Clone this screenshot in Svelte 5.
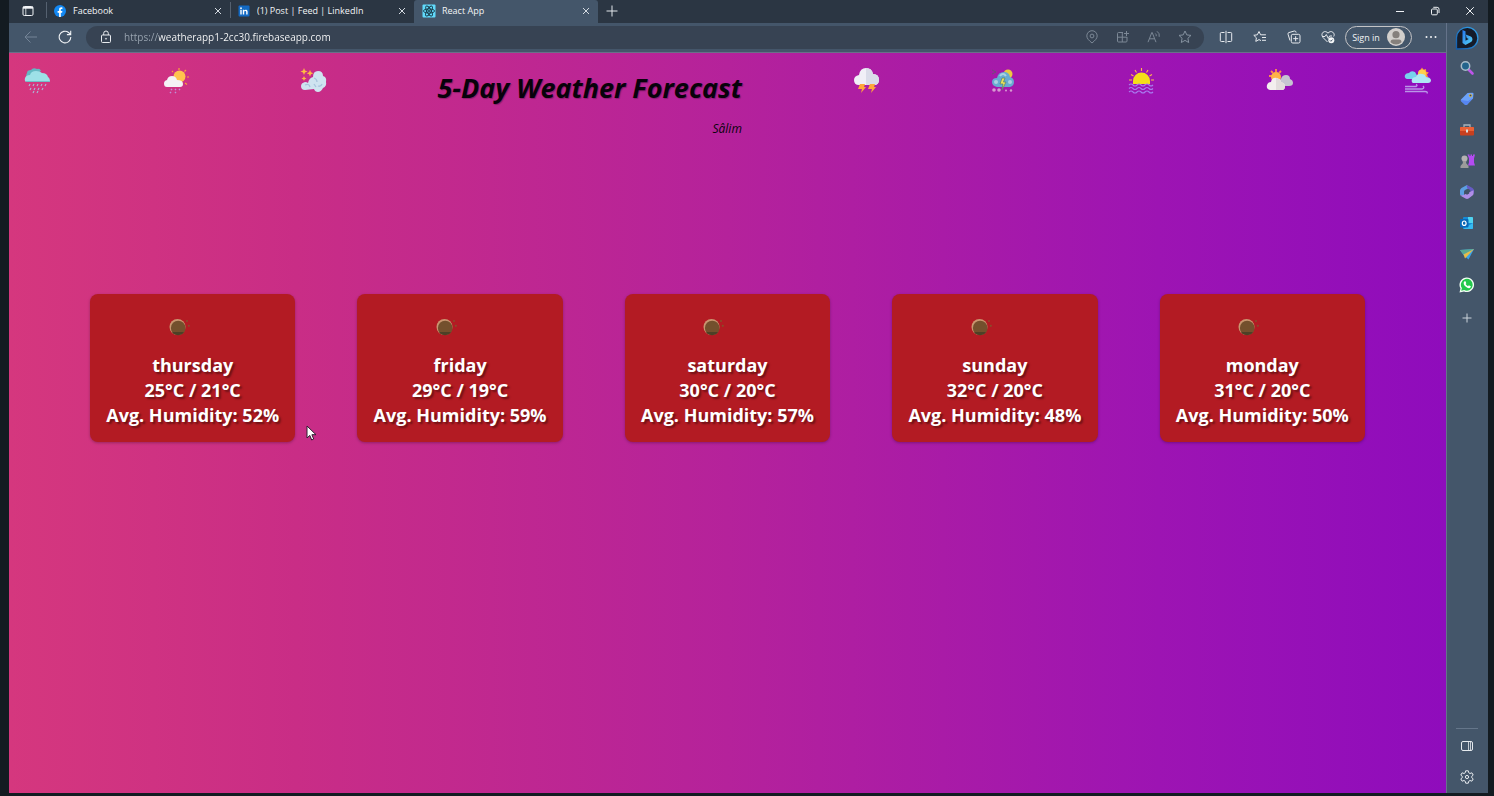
<script>
  const days = [
    { name: 'thursday', high: 25, low: 21, humidity: 52 },
    { name: 'friday', high: 29, low: 19, humidity: 59 },
    { name: 'saturday', high: 30, low: 20, humidity: 57 },
    { name: 'sunday', high: 32, low: 20, humidity: 48 },
    { name: 'monday', high: 31, low: 20, humidity: 50 }
  ];
  let address = $state('https://weatherapp1-2cc30.firebaseapp.com');
</script>

{#snippet closeGlyph()}
  <svg width="8" height="8" viewBox="0 0 8 8" fill="none" stroke="#d5dbe2" stroke-width="1"><path d="M1 1l6 6M7 1l-6 6" /></svg>
{/snippet}

<div class="screen">
  <div class="window">
    <header class="tabs">
      <button class="tab-actions" aria-label="Tab actions">
        <svg width="12" height="12" viewBox="0 0 12 12" fill="none" stroke="#f2f5f8"><rect x="1" y="1.5" width="10" height="9" rx="1.3" /><path d="M1 2.7h10" stroke-width="2" /><path d="M3.8 3v7.5" stroke-width=".8" /></svg>
      </button>
      <div class="tab">
        <svg width="12" height="12" viewBox="0 0 12 12"><circle cx="6" cy="6" r="6" fill="#1388f3" /><path d="M5.1 12V7.8H3.6V6h1.5V4.7c0-1.6.9-2.4 2.3-2.4.5 0 1 .1 1 .1V4h-.7c-.7 0-.9.4-.9.9V6h1.6l-.3 1.8H6.8V12z" fill="#fff" /></svg>
        <span>Facebook</span>
        <button aria-label="Close Facebook">{@render closeGlyph()}</button>
      </div>
      <div class="tab">
        <svg width="12" height="12" viewBox="0 0 12 12"><rect x=".5" y=".5" width="11" height="11" rx="1" fill="#1269c3" /><g fill="#fff"><circle cx="3" cy="3.2" r=".9" /><path d="M2.3 4.8h1.4v4.7H2.3zM4.8 4.8h1.3v.6c.8-1.1 3.5-1.1 3.5 1.2v2.9H8.2V7c0-1.5-2-1.4-2 0v2.5H4.8z" /></g></svg>
        <span>(1) Post | Feed | LinkedIn</span>
        <button aria-label="Close LinkedIn">{@render closeGlyph()}</button>
      </div>
      <div class="tab active">
        <svg width="14" height="14" viewBox="0 0 14 14"><rect x=".5" y=".5" width="13" height="13" rx="1" fill="#61dafb" /><g fill="none" stroke="#173746" stroke-width=".9"><ellipse cx="7" cy="7" rx="5.6" ry="2.1" /><ellipse cx="7" cy="7" rx="5.6" ry="2.1" transform="rotate(60 7 7)" /><ellipse cx="7" cy="7" rx="5.6" ry="2.1" transform="rotate(120 7 7)" /></g><circle cx="7" cy="7" r="1" fill="#173746" /></svg>
        <span>React App</span>
        <button aria-label="Close React App">{@render closeGlyph()}</button>
      </div>
      <button class="new-tab" aria-label="New tab">
        <svg width="12" height="12" viewBox="0 0 12 12" stroke="#e3e7ec"><path d="M6 .5v11M.5 6h11" /></svg>
      </button>
      <div class="window-controls">
        <button aria-label="Minimize"><svg width="10" height="10" viewBox="0 0 10 10" stroke="#f0f3f6"><path d="M1 5.5h8" /></svg></button>
        <button aria-label="Restore"><svg width="10" height="10" viewBox="0 0 10 10" fill="none" stroke="#f0f3f6"><rect x="1.5" y="3" width="5.8" height="5.8" rx="1" /><path d="M3.3 1.3h3.8Q9 1.3 9 3.2V7" /></svg></button>
        <button aria-label="Close window"><svg width="10" height="10" viewBox="0 0 10 10" stroke="#f0f3f6"><path d="M1.2 1.2l7.6 7.6M8.8 1.2l-7.6 7.6" /></svg></button>
      </div>
    </header>

    <nav class="toolbar">
      <button class="nav-button" aria-label="Back"><svg width="14" height="14" viewBox="0 0 14 14" fill="none" stroke="#748497"><path d="M13 7H1M6.5 1.5L1 7l5.500 5.500" /></svg></button>
      <button class="nav-button" aria-label="Refresh"><svg width="14" height="14" viewBox="0 0 14 14" fill="none" stroke="#eef1f4" stroke-width="1.1"><path d="M12.800 7A5.800 5.800 0 1 1 10.600 2.500L12.500 4.300M12.700 .8v3.800H8.900" /></svg></button>
      <div class="address">
        <svg width="12" height="14" viewBox="0 0 12 14" fill="none" stroke="#e8ebef"><rect x="1.500" y="5" width="9" height="7.500" rx="1" /><path d="M3.700 5V3.300a2.300 2.300 0 0 1 4.600 0V5" /><circle cx="6" cy="8.700" r=".6" fill="#e8ebef" stroke-width=".5" /></svg>
        <input aria-label="Address" type="text" spellcheck="false" bind:value={address} />
        <div class="address-tools">
          <button aria-label="Location"><svg width="14" height="14" viewBox="0 0 14 14" fill="none" stroke="#7c8896"><path d="M7 13C4 10.500 1.800 8.500 1.800 5.900a5.200 5.200 0 0 1 10.400 0C12.200 8.500 10 10.500 7 13z" /><circle cx="7" cy="6" r="1.900" /></svg></button>
          <button aria-label="Install app"><svg width="14" height="14" viewBox="0 0 14 14" fill="none" stroke="#7c8896"><path d="M7 2.500H2.500a1 1 0 0 0-1 1V11a1 1 0 0 0 1 1H10a1 1 0 0 0 1-1V7M6.300 2.500V12M1.500 7.200H11M10.500 1v5M8 3.500h5" /></svg></button>
          <button aria-label="Read aloud"><svg width="14" height="14" viewBox="0 0 14 14" fill="none" stroke="#7c8896"><path d="M1 12.200L4.800 2.500h.4L9 12.200M2.400 8.800h5.200M8.300 3.500q1.300 1 .9 2.700M10 1.300q3 2 2.200 5.500" /></svg></button>
          <button aria-label="Add to favorites"><svg width="14" height="14" viewBox="0 0 14 14" fill="none" stroke="#8592a0"><path d="M7 1l1.800 3.900 4.200.5-3.100 2.900.8 4.200L7 10.400l-3.700 2.100.8-4.200L1 5.400l4.200-.5z" /></svg></button>
        </div>
      </div>
      <div class="browser-tools">
        <button aria-label="Split screen"><svg width="14" height="14" viewBox="0 0 14 14" fill="none" stroke="#e8ebef"><path d="M5.500 2.500H2.300q-1 0-1 1v7q0 1 1 1h3.200M8.500 2.500h3.200q1 0 1 1v7q0 1-1 1H8.500M7 .8v12.400" /></svg></button>
        <button aria-label="Favorites"><svg width="14" height="14" viewBox="0 0 14 14" fill="none" stroke="#e8ebef"><path d="M8 10.600L6 9.600l-3.200 1.800.6-3.600L.8 5.300l3.500-.5L6 1.500l1.600 3.300h5.300M9 7.500h4M9 10.300h4" /></svg></button>
        <button aria-label="Collections"><svg width="14" height="14" viewBox="0 0 14 14" fill="none" stroke="#e8ebef"><rect x="4.300" y="4.300" width="8.700" height="8.700" rx="1.500" /><path d="M3 10.500L1 4.200Q.7 3 1.800 2.600L7.300 1q1.200-.3 1.600.8l.2.8M8.650 6.200v5M6.200 8.650h5" /></svg></button>
        <button aria-label="Browser essentials"><svg width="14" height="14" viewBox="0 0 14 14" fill="none" stroke="#e8ebef"><path d="M6.500 12L2 7.500C.4 5.600.7 3.300 2.200 2.200S5.700 1.500 7 3.200c1.300-1.700 3.300-2.100 4.800-1S13.600 5 12.700 6.500M1.500 6.500H4l1.300-2 2 4L8.600 6H11" /><circle cx="10.300" cy="10.300" r="3" fill="#f4f6f8" stroke="none" /><path d="M8.900 10.300l1 1 1.700-1.800" stroke="#44566a" /></svg></button>
      </div>
      <button class="sign-in">Sign in
        <svg width="18" height="18" viewBox="0 0 18 18"><circle cx="9" cy="9" r="9" fill="#d2cfcc" /><circle cx="9" cy="6.700" r="3.600" fill="#85807c" /><path d="M3.500 14.200q0-2.600 2.500-2.600h6q2.500 0 2.500 2.600Q12 16.500 9 16.500t-5.500-2.300z" fill="#85807c" /></svg>
      </button>
      <button class="more" aria-label="Settings and more"><svg width="12" height="4" viewBox="0 0 12 4" fill="#f2f4f6"><circle cx="1.500" cy="2" r="1" /><circle cx="6" cy="2" r="1" /><circle cx="10.500" cy="2" r="1" /></svg></button>
    </nav>

    <main class="page">
      <div class="page-head">
        <svg class="weather" viewBox="0 0 27 27"><path d="M4 11Q1 9 3 6q0-3 4-3 2-3 6-1 3-1 4 2z" fill="#63b9c3" /><path d="M3 15q-3 0-2-4 1-3 5-3 1-4 6-4 4 0 6 2 5 0 6 4 2 1 2 5z" fill="#9de1e7" /><path d="M2 14.500h24" stroke="#73bdc9" /><path d="M6 17l-1 2m5-2l-1 2m5-2l-1 2m5-2l-1 2m5-2l-1 2M7 21l-1 2m5-2l-1 2m5-2l-1 2m5-2l-1 2M10 24l-1 2m5-2l-1 2" stroke="#a9bbd8" stroke-width="1.100" /></svg>
        <svg class="weather" viewBox="0 0 27 27"><g stroke="#f7a33a" stroke-width="1.200"><path d="M17 1v2M10 4l1 1M24 3l-1.500 1.500M25 10h2M23 16l2 1.500" /></g><circle cx="17.500" cy="9.500" r="6" fill="#ffc24d" /><path d="M5 20q-3 0-3-3.500 0-3 3-3.500 1-4 5-4 4 0 5 4 6 0 6 4 0 3-3 3z" fill="#f4f2f6" /><path d="M10 22l-1 1m5-1l-1 1m5-1l-1 1M9 25l-1 1m6-1l-1 1" stroke="#bf91d6" stroke-width="1.500" /></svg>
        <svg class="weather" viewBox="0 0 27 27"><path d="M5 23q-4 0-4-4 0-3 4-4 2 0 3 1 1-5 5-6 0-6 5-6t5 5q4 1 3 6 1 4-3 6-2 4-5 4-3 0-4-3z" fill="#cfe4f0" /><path d="M5 18q4-2 5 2M14 11q3 1 3 4M22 17q-1 3-4 2M14 17l2 3" fill="none" stroke="#a8c5dc" stroke-width="1.300" /><g fill="#ffba42"><path d="M4 1l1 2.500L7.500 4.500 5 5.500 4 8 3 5.500.5 4.500 3 3.500zM10 3l1 2.300 2.300 1L11 7.300 10 9.600 9 7.300l-2.300-1L9 5.300zM4 9l.8 1.700 1.700.8-1.700.8L4 14l-.8-1.700-1.700-.8 1.700-.8z" /></g></svg>
        <div class="heading"><h1>5-Day Weather Forecast</h1><p>Sâlim</p></div>
        <svg class="weather" viewBox="0 0 27 27"><path d="M6 18q-5 0-5-5 0-4 5-5 1-7 7-7 6 0 7 6 6 0 6 6 0 5-5 5z" fill="#f0eff7" /><path d="M13 1q6 0 7 6 6 0 6 6 0 5-5 5h-8z" fill="#dadce9" /><path d="M7 17h5l-1 3h2l-5 6 1-4H5zM17 17h5l-1 3h2l-5 6 1-4h-4z" fill="#ffa63a" /></svg>
        <svg class="weather" viewBox="0 0 27 27"><circle cx="18" cy="7" r="4.500" fill="#edc83e" /><path d="M7 20q-5-1-5-5 0-4 5-4 1-6 7-6 5 0 6 5 4 1 4 5t-4 5z" fill="#67acd2" /><path d="M10 9q3-4 6 0" stroke="#acd2e2" stroke-width="2" fill="none" /><g fill="#acd2e2"><circle cx="6" cy="15" r="2" /><circle cx="20" cy="15" r="2" /></g><path d="M12 11h3l-1.500 4H16l-4 8 1-6h-3z" fill="#e7e15b" stroke="#55806a" stroke-width=".7" /><g fill="#d69ad1"><circle cx="4" cy="23" r="1.800" /><circle cx="9" cy="23" r="1.800" /><circle cx="16" cy="23.500" r="1" /><circle cx="21" cy="23.500" r="1.200" /></g><path d="M2 3l4 2-4 2" fill="none" stroke="#704d78" /></svg>
        <svg class="weather" viewBox="0 0 27 27"><g stroke="#ffb84b" stroke-width="1.100"><path d="M13.500 1v3M7 3l1.500 2.500M20 3l-1.500 2.500M3 7.500L5.500 9M24 7.500L21.500 9M1 13h3M23 13h3" /></g><path d="M5 17V14a8.500 8.500 0 0 1 17 0v3z" fill="#f5de19" /><path d="M1 18q2-2 4 0t4 0 4 0 4 0 4 0 4 0M1 21.500q2-2 4 0t4 0 4 0 4 0 4 0 4 0M1 25q2-2 4 0t4 0 4 0 4 0 4 0 4 0" fill="none" stroke="#a87bef" stroke-width="1.100" /></svg>
        <svg class="weather" viewBox="0 0 27 27"><path d="M10 2v3M5 4l2 2M15 4l-2 2M3 9h3" stroke="#ff8e4a" stroke-width="1.800" /><circle cx="10" cy="10" r="5" fill="#ffb348" /><path d="M13 19q-2-6 2-7 1-4 5-4 4 0 4 4 3 1 3 4t-4 3z" fill="#c6c4d1" /><path d="M4 23q-4-1-3-5 1-3 4-3 1-5 6-4 4 1 4 4 4 1 4 4 0 4-3 4z" fill="#f3eeee" /><path d="M10 11q4 1 5 4 4 1 4 4 0 4-3 4h-6z" fill="#e2dcdc" /></svg>
        <svg class="weather" viewBox="0 0 27 27"><path d="M18 .5l1.500 2.300L22 2l.2 2.700 2.600.8-1.800 2.100L24 10H12z" fill="#ff9741" /><circle cx="18" cy="6.500" r="4" fill="#ffcf4d" /><path d="M3 12q-3-1-2-4 1-2 4-2 2-3 6-1l4 7z" fill="#76d3ec" /><path d="M9 16q-2-1-1-4 1-2 4-2 2-4 6-3 3 0 4 3 4 0 5 3 0 3-3 3z" fill="#afe8f4" /><path d="M1 19.500h11q2-1 0-2M1 22h17q3-1 1-3M1 24.500h20q3 0 2 2" fill="none" stroke="#b996e7" stroke-width="1.400" /></svg>
      </div>
      <section class="forecast">
        {#each days as day}
          <article class="card">
            <svg width="22" height="18" viewBox="0 0 22 18"><circle cx="8.500" cy="9" r="8" fill="#c99670" /><circle cx="9.200" cy="10" r="7.300" fill="#73502d" /><path d="M3 14a7.300 7.300 0 0 0 12 0z" fill="#4d4026" /><circle cx="18" cy="3" r="1.100" fill="#8b4b2a" /><circle cx="19.800" cy="7.800" r="1.100" fill="#8b4b2a" /></svg>
            <h2>{day.name}</h2>
            <p>{day.high}°C / {day.low}°C</p>
            <p>Avg. Humidity: {day.humidity}%</p>
          </article>
        {/each}
      </section>
    </main>

    <aside class="sidebar">
      <button class="bing" aria-label="Bing"><svg width="24" height="26" viewBox="0 0 24 26"><defs><linearGradient id="ring" x1="0" y1="1" x2="1" y2="0"><stop stop-color="#125cae" /><stop offset="1" stop-color="#35a7ef" /></linearGradient><linearGradient id="bee" x1="0" y1="0" x2="1" y2="1"><stop stop-color="#2476f0" /><stop offset="1" stop-color="#58d6f4" /></linearGradient></defs><path d="M1.500 24V12.500a10.700 10.700 0 1 1 10.700 11.200z" fill="#151c2a" stroke="url(#ring)" stroke-width="1.300" /><path d="M7.500 5l3 1.300v9.400l3.200-1.800-2-1-1-3.300 4.500 1.700c2.700 1 3 4.300.7 5.800L10.500 20l-3-2z" fill="url(#bee)" /></svg></button>
      <button aria-label="Search"><svg width="16" height="16" viewBox="0 0 16 16" fill="none"><path d="M9.500 9.500l4 4" stroke="#bd55e9" stroke-width="2.600" stroke-linecap="round" /><circle cx="6.500" cy="6" r="4.200" fill="#23648c" stroke="#a9bdca" stroke-width="1.500" /></svg></button>
      <button aria-label="Shopping"><svg width="16" height="16" viewBox="0 0 16 16"><path d="M2 8.500L8.500 2l5-.2q1 0 1 1L14 7.500l-6 6.200q-1 .8-2 0L2 10q-.6-.7 0-1.500z" fill="#6ba2fa" /><path d="M2 9l7 1 5-3-6 6.700q-1 .8-2 0L2 10z" fill="#5685f2" /><circle cx="11.500" cy="4.500" r="1.300" fill="#293e6b" stroke="#e8bf42" /></svg></button>
      <button aria-label="Tools"><svg width="16" height="16" viewBox="0 0 16 16"><path d="M5 5V3h6v2" fill="none" stroke="#a6b2bb" stroke-width="1.300" /><rect x="1" y="5" width="14" height="8.500" rx="1" fill="#c8401f" /><path d="M1 6q0-1 1-1h12q1 0 1 1v3H1z" fill="#ea6136" /><rect x="7" y="7.500" width="2" height="3" fill="#d9e0e3" /></svg></button>
      <button aria-label="Games"><svg width="16" height="16" viewBox="0 0 16 16"><path d="M8.500 1.500h2V3h1V1.500h1.500V3h1V1.500H16l-1 4v4l1 3H9l1-3v-4z" fill="#b44bf1" /><circle cx="5.500" cy="5.500" r="3" fill="#b5b3b2" /><path d="M3.500 8h4L7 10l2.500 3v2h-8v-2L4 10z" fill="#9b9b9b" /></svg></button>
      <button aria-label="Microsoft 365"><svg width="16" height="16" viewBox="0 0 16 16"><path d="M8 1L2.500 4Q1 5 1 6.500v4L5 13V7.500q0-1 1-1.500l4-2z" fill="#5c9fe2" /><path d="M8 1q-1 3 2 4.200 1.500.7 1.500 2V11l3-1.500q.5-1 .5-2V6.500Q15 5 13.500 4z" fill="#675bc6" /><path d="M1 9.500q.5 3 4 1.200l9.500-4.500v3.600q0 1.200-1 1.800L9.500 14.500q-1.500.9-3 0L2 12q-1-.7-1-2.500z" fill="#b08ee8" /><path d="M6 7l2-1.200L10.200 7v2.500L8 10.700 6 9.500z" fill="#405168" /></svg></button>
      <button aria-label="Outlook"><svg width="16" height="16" viewBox="0 0 16 16"><rect x="4" y="2" width="10" height="12" rx="1" fill="#168bd7" /><path d="M9 2h4q1 0 1 1v5H9z" fill="#50d3ef" /><path d="M4 14l10-6v5q0 1-1 1z" fill="#35baf1" /><rect x="1" y="4" width="8.500" height="8.500" rx="1" fill="#0868b8" /><ellipse cx="5.200" cy="8.200" rx="1.900" ry="2.200" fill="none" stroke="#fff" stroke-width="1.200" /></svg></button>
      <button aria-label="Drop"><svg width="16" height="16" viewBox="0 0 16 16"><path d="M1 4L15 3 9.500 13.500 4.500 9z" fill="#3aa3ea" /><path d="M1 4L15 3 4.500 8.500z" fill="#5aa990" /><path d="M4.500 8.500L15 3 6 12.500z" fill="#e8bd46" /></svg></button>
      <button aria-label="WhatsApp"><svg width="16" height="16" viewBox="0 0 16 16"><path d="M.5 15.500l1-4A7.300 7.300 0 1 1 5 14.500z" fill="#f3fff5" /><path d="M2.200 13.700l.7-2.600a5.900 5.900 0 1 1 2.300 2z" fill="#23c94c" /><path d="M5.500 4.300l1-.1.800 2-.7.900q.8 1.500 2.400 2.200l.8-1 2 1-.2 1q-1.200 1.500-3.300.5Q5.600 9.500 4.800 7.200q-.6-1.700.7-2.900z" fill="#fff" /></svg></button>
      <button class="add" aria-label="Customize sidebar"><svg width="10" height="10" viewBox="0 0 10 10" stroke="#cbd3db"><path d="M5 .5v9M.5 5h9" /></svg></button>
      <div class="sidebar-foot">
        <button aria-label="Hide sidebar"><svg width="14" height="14" viewBox="0 0 14 14" fill="none" stroke="#e6eaee"><rect x="1.500" y="2.500" width="11" height="9" rx="1.500" /><path d="M8.500 2.500v9M10.500 2.500v9" stroke-width=".8" /></svg></button>
        <button aria-label="Sidebar settings"><svg width="14" height="14" viewBox="0 0 14 14" fill="none" stroke="#e6eaee"><path d="M5.700.8h2.600L8.700 2.700l1.300.8 1.900-.7 1.300 2.300-1.500 1.300v1.200l1.500 1.300-1.300 2.300-1.900-.7-1.300.8-.4 1.900H5.700l-.4-1.900-1.300-.8-1.900.7L.8 8.900l1.500-1.300V6.400L.8 5.100l1.300-2.300 1.900.7 1.300-.8z" stroke-linejoin="round" /><circle cx="7" cy="7" r="1.600" /></svg></button>
      </div>
    </aside>
  </div>
  <svg class="pointer" width="12" height="16" viewBox="0 0 12 16"><path d="M1 1v12l2.800-2.600L5.700 15l2-1L5.900 9.700H10z" fill="#fff" stroke="#2d2030" /></svg>
</div>

<style>
  :global(body) { margin: 0; }
  .screen { position: relative; box-sizing: border-box; min-height: 100vh; display: flex; padding: 0 6px 3px 9px; background: #131b21; font-family: "Segoe UI", "Open Sans", sans-serif; color: #f2f4f6; }
  .window { flex: 1; display: grid; grid-template: 23px 30px 1fr / minmax(0, 1fr) 42px; background: #44566a; }
  button { display: flex; align-items: center; justify-content: center; padding: 0; border: 0; background: none; color: inherit; font: inherit; }
  svg { display: block; flex: none; }
  .tabs { grid-column: 1 / 3; display: flex; align-items: center; background: #2b3643; padding-bottom: 2px; font-size: 9px; }
  .tab-actions { width: 37px; }
  .tab { box-sizing: border-box; flex: 0 1 184px; min-width: 0; height: 23px; margin-bottom: -2px; padding: 0 8px 2px; display: flex; align-items: center; gap: 7px; background: linear-gradient(#556170, #556170) 0 2px / 1px 16px no-repeat; }
  .tab span { flex: 1; white-space: nowrap; overflow: hidden; }
  .tab.active { background: #44566a; border-radius: 3px 3px 0 0; gap: 6px; }
  .new-tab { width: 28px; }
  .window-controls { margin-left: auto; display: flex; padding-right: 1px; }
  .window-controls button { width: 35px; }
  .toolbar { display: flex; align-items: center; padding: 0 1px 2px 5px; }
  .nav-button { width: 34px; height: 24px; }
  .nav-button + .nav-button { margin-right: 4px; }
  .toolbar .address { flex: 1; min-width: 0; height: 23px; margin-right: 5px; display: flex; align-items: center; gap: 12px; padding-left: 14px; background: #374353; border-radius: 12px; }
  .address input { flex: 1; min-width: 0; padding: 0; border: 0; outline: 0; font: 10px/16px "Segoe UI", "Open Sans", sans-serif; color: transparent; background: linear-gradient(90deg, #9ba6b2 35px, #fff 35px); background-clip: text; -webkit-background-clip: text; }
  .address-tools { display: flex; padding-right: 4px; }
  .address-tools button { width: 31px; }
  .browser-tools { display: flex; }
  .browser-tools button { width: 34px; }
  .sign-in { box-sizing: border-box; height: 23px; width: 67px; gap: 7px; border: 1px solid #c4c4c6; border-radius: 12px; font-size: 9px; white-space: nowrap; }
  .more { width: 28px; margin-left: 5px; }
  .page { border-top: 1px solid #697089; margin-top: -1px; background: linear-gradient(90deg, #d5377e, #c92d86 20%, #b5229b 50%, #9d14b3 80%, #8f0cbc); }
  .page-head { display: flex; justify-content: space-between; align-items: flex-start; padding: 14px 15px 0; color: #08020b; }
  .weather { width: 27px; height: 27px; }
  .heading { text-align: right; font-style: italic; }
  h1 { margin: 0; font-size: 27px; line-height: 42px; font-weight: 700; text-shadow: 1px 1px 1px #0004; }
  .heading p { margin: 10px 0 0; font-size: 12px; line-height: 20px; }
  .forecast { display: grid; grid-template-columns: repeat(5, minmax(0, 1fr)); gap: 62px; padding: 155px 81px 0; }
  .card { display: flex; flex-direction: column; align-items: center; padding: 24px 0 14px; border-radius: 8px; background: #b31b23; box-shadow: 0 1px 3px #0004; font-weight: 700; font-size: 18px; line-height: 25px; color: #fff; text-shadow: 2px 2px 2px #0006; white-space: nowrap; }
  .card svg { margin: 0 26px 17px 0; }
  h2, .card p { margin: 0; font: inherit; }
  .sidebar { grid-row: 2 / 4; grid-column: 2; display: flex; flex-direction: column; align-items: center; padding-right: 1px; border-left: 1px solid #65738a; }
  .sidebar button { width: 32px; height: 31px; }
  .sidebar .bing { height: 29px; }
  .sidebar .add { height: 36px; }
  .sidebar-foot { margin-top: auto; width: 22px; display: flex; flex-direction: column; align-items: center; border-top: 1px solid #65768a; padding: 1px 0; }
  .pointer { position: absolute; left: 306px; top: 425px; }
</style>
